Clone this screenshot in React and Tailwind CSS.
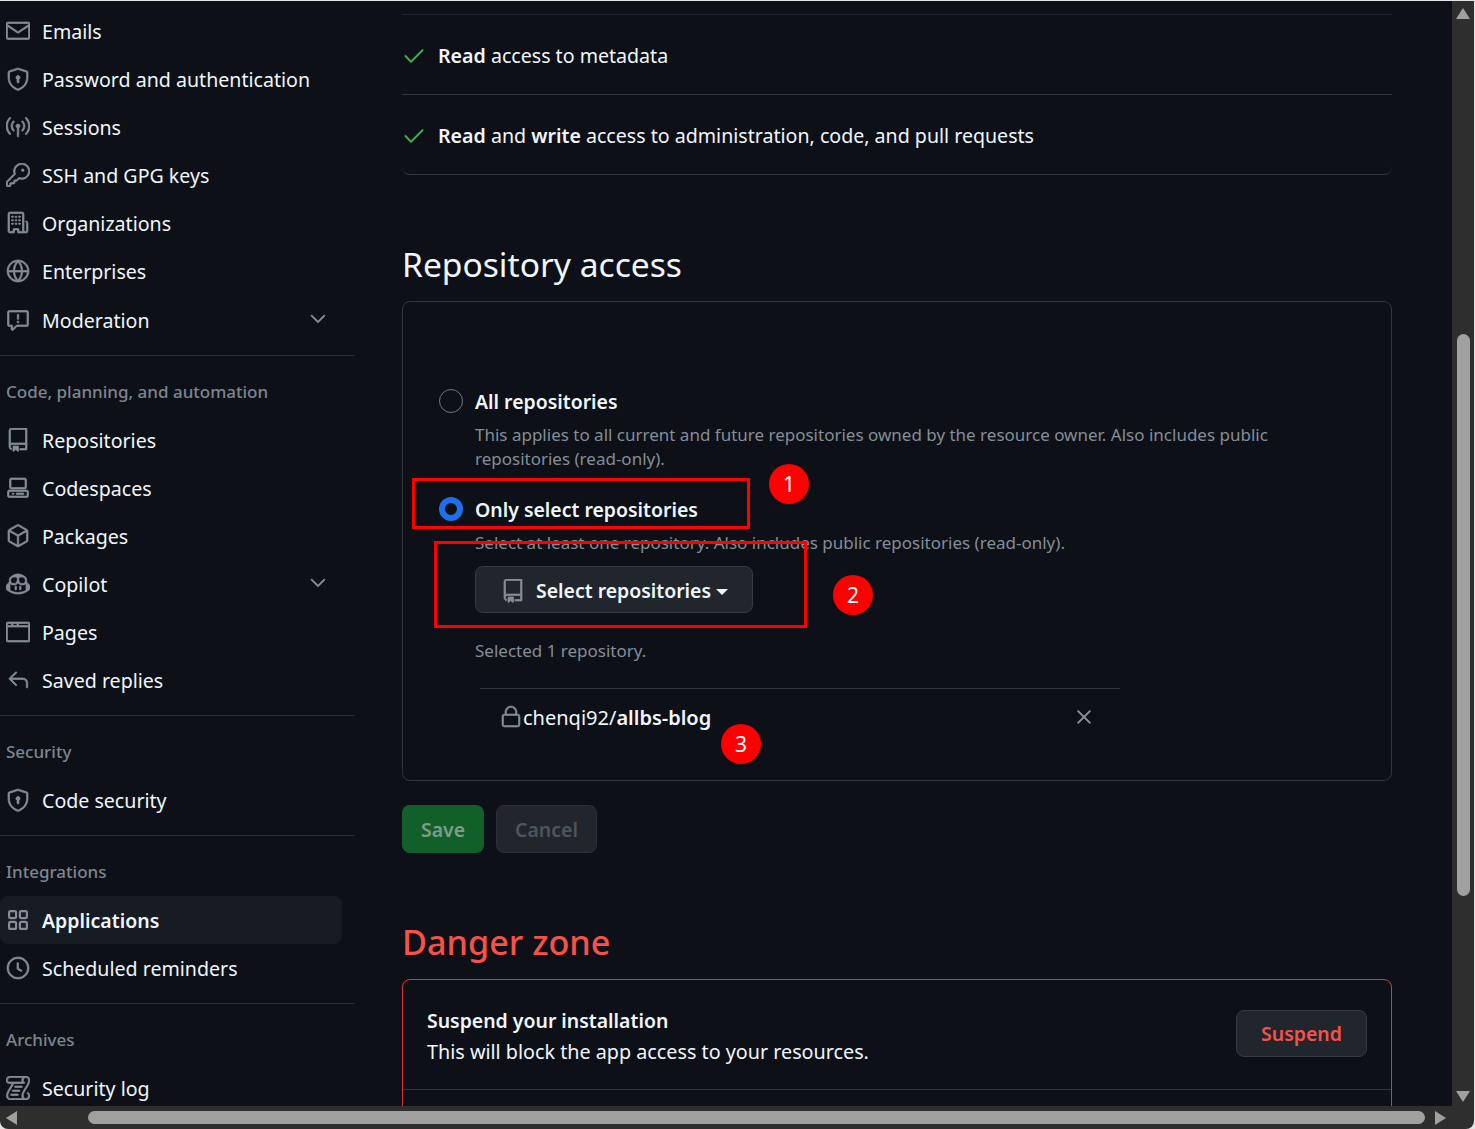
import React from "react";
import {
  GoMail, GoShieldLock, GoBroadcast, GoKey, GoOrganization, GoGlobe, GoReport, GoRepo, GoCodespaces,
  GoPackage, GoCopilot, GoBrowser, GoReply, GoClock, GoLog, GoChevronDown, GoCheck, GoLock, GoX,
} from "react-icons/go";

function GoAppsIcon({ size, className }) {
  return (
    <svg width={size} height={size} viewBox="0 0 24 24" fill="none" stroke="currentColor" className={className}>
      <g strokeWidth="2.2">
        <rect x="3.1" y="3.1" width="7" height="7" rx="1.5" />
        <rect x="13.9" y="3.1" width="7" height="7" rx="1.5" />
        <rect x="3.1" y="13.9" width="7" height="7" rx="1.5" />
        <rect x="13.9" y="13.9" width="7" height="7" rx="1.5" />
      </g>
    </svg>
  );
}

function Item({ icon: Icon, label, chevron, active, className = "" }) {
  return (
    <div className={`flex h-12 items-center rounded-lg mr-3 pl-[6px] ${active ? "bg-[#171b22] text-[19.5px] font-semibold" : ""} ${className}`}>
      <Icon size={24} className="shrink-0 stroke-[0.7] text-[#848d97]" />
      <span className="ml-3 flex-1 whitespace-nowrap pt-[2px] text-[#f0f6fc]">{label}</span>
      {chevron && <GoChevronDown size={24} className="mr-3 mb-[2px] stroke-[0.6] text-[#848d97]" />}
    </div>
  );
}

function Heading({ children }) {
  return <div className="flex h-[24px] items-center pl-[6px] text-[17px] font-medium text-[#7d8590]">{children}</div>;
}

function Divider() {
  return <div className="h-px bg-[#2a2f36]" />;
}

function Sidebar() {
  return (
    <nav className="w-[354px] shrink-0 pt-[6px]">
      <Item icon={GoMail} label="Emails" />
      <Item icon={GoShieldLock} label="Password and authentication" />
      <Item icon={GoBroadcast} label="Sessions" />
      <Item icon={GoKey} label="SSH and GPG keys" />
      <Item icon={GoOrganization} label="Organizations" />
      <Item icon={GoGlobe} label="Enterprises" />
      <Item icon={GoReport} label="Moderation" chevron className="mt-px" />
      <div className="mt-[11px]"><Divider /></div>
      <div className="mt-6 mb-[12px]"><Heading>Code, planning, and automation</Heading></div>
      <Item icon={GoRepo} label="Repositories" />
      <Item icon={GoCodespaces} label="Codespaces" />
      <Item icon={GoPackage} label="Packages" />
      <Item icon={GoCopilot} label="Copilot" chevron />
      <Item icon={GoBrowser} label="Pages" />
      <Item icon={GoReply} label="Saved replies" />
      <div className="mt-[11px]"><Divider /></div>
      <div className="mt-6 mb-[12px]"><Heading>Security</Heading></div>
      <Item icon={GoShieldLock} label="Code security" />
      <div className="mt-[11px]"><Divider /></div>
      <div className="mt-6 mb-[12px]"><Heading>Integrations</Heading></div>
      <Item icon={GoAppsIcon} label="Applications" active />
      <Item icon={GoClock} label="Scheduled reminders" />
      <div className="mt-[11px]"><Divider /></div>
      <div className="mt-6 mb-[12px]"><Heading>Archives</Heading></div>
      <Item icon={GoLog} label="Security log" />
    </nav>
  );
}

function Perm({ children, last }) {
  return (
    <div className={`box-border flex h-[80px] items-center border-[#30363d] pt-[2px] ${last ? "rounded-b-lg border-b" : "border-b"}`}>
      <GoCheck size={24} className="shrink-0 stroke-[0.6] text-[#3fb950]" />
      <span className="ml-[12px] text-[#f0f6fc]">{children}</span>
    </div>
  );
}

function Main() {
  return (
    <main className="ml-[48px] w-[990px] shrink-0 pt-[13px]">
      <div className="border-t border-[#21262d]">
        <Perm><b className="font-semibold">Read</b> access to metadata</Perm>
        <Perm last><b className="font-semibold">Read</b> and <b className="font-semibold">write</b> access to administration, code, and pull requests</Perm>
      </div>

      <h2 className="mt-[61px] text-[33.6px] leading-[56px] text-[#f0f6fc]">Repository access</h2>

      <section className="mt-[9px] h-[480px] rounded-lg border border-[#30363d] pl-[36px] pt-[87px]">
        <div className="flex h-6 items-center">
          <span className="box-border h-6 w-6 shrink-0 rounded-full border border-[#6e7681]" />
          <span className="ml-3 pt-[2px] text-[19.45px] font-semibold text-[#f0f6fc]">All repositories</span>
        </div>
        <p className="ml-[36px] mt-[10px] w-[820px] text-[17px] leading-6 text-[#848d97]">
          This applies to all current and future repositories owned by the resource owner. Also includes public repositories (read-only).
        </p>
        <div className="mt-[26px] flex h-6 items-center">
          <span className="box-border h-6 w-6 shrink-0 rounded-full border-[6px] border-[#1f6feb] bg-[#0d1117]" />
          <span className="ml-3 pt-[2px] text-[19.45px] font-semibold text-[#f0f6fc]">Only select repositories</span>
        </div>
        <p className="ml-[36px] mt-[10px] text-[17px] leading-6 text-[#848d97]">
          Select at least one repository. Also includes public repositories (read-only).
        </p>
        <button className="ml-[36px] mt-[11px] box-border flex h-[47px] w-[278px] items-center rounded-lg border border-[#363b42] bg-[#21262d] pl-[25px] pt-[2px] text-[19.45px] font-semibold text-[#f0f6fc]">
          <GoRepo size={24} className="stroke-[0.7] text-[#848d97]" />
          <span className="ml-[11px]">Select repositories</span>
          <span className="ml-[5px] mt-[3px] h-0 w-0 border-x-[6px] border-t-[6px] border-x-transparent border-t-[#f0f6fc]" />
        </button>
        <p className="ml-[36px] mt-[26px] text-[17px] leading-6 text-[#848d97]">Selected 1 repository.</p>
        <div className="ml-[41px] mt-[25px] flex h-[58px] w-[640px] items-center border-t border-[#30363d] pl-[19px] pr-[24px]">
          <GoLock size={24} className="mb-[2px] shrink-0 stroke-[0.6] text-[#848d97]" />
          <span className="flex-1 text-[20px] text-[#f0f6fc]">chenqi92/<b className="font-semibold">allbs-blog</b></span>
          <GoX size={24} className="mb-[2px] stroke-[0.7] text-[#848d97]" />
        </div>
      </section>

      <div className="mt-[24px] flex gap-3 text-[19.45px] font-semibold">
        <button className="box-border h-[48px] w-[82px] rounded-lg bg-[#11602a] pt-[2px] text-[#7d9e86]">Save</button>
        <button className="box-border h-[48px] w-[101px] rounded-lg border border-[#2a3038] bg-[#21262d] pt-[2px] text-[#4e555d]">Cancel</button>
      </div>

      <h2 className="mt-[61px] text-[34.2px] font-medium leading-[56px] text-[#f85149]">Danger zone</h2>

      <section className="mt-[9px] h-[200px] rounded-t-lg border border-[#da3633]">
        <div className="flex h-[110px] items-center justify-between border-b border-[#30363d] pl-[24px] pr-[24px]">
          <div className="pt-[2px] text-[#f0f6fc]">
            <div className="text-[19.45px] font-semibold leading-[31px]">Suspend your installation</div>
            <div className="text-[19.75px] leading-[31px]">This will block the app access to your resources.</div>
          </div>
          <button className="mb-[3px] box-border h-[47px] w-[131px] rounded-lg border border-[#363b42] bg-[#21262d] pt-[2px] text-[19.45px] font-semibold text-[#f85149]">Suspend</button>
        </div>
      </section>
    </main>
  );
}

function Annotation({ className, children }) {
  return (
    <div className={`absolute flex items-center justify-center ${className}`}>{children}</div>
  );
}

function Tri({ className }) {
  return <div className={`h-0 w-0 ${className}`} />;
}

export default function App() {
  return (
    <div className="relative h-[1129px] w-[1475px] overflow-hidden bg-[#e4e4e4] pt-px text-[19.6px] [font-family:'Noto_Sans','Open_Sans',sans-serif]">
      <div className="flex h-[1128px] w-[1474px] flex-col overflow-hidden rounded-b-lg bg-[#2e2e2e]">
        <div className="flex h-[1105px]">
          <div className="flex w-[1452px] overflow-hidden bg-[#0d1117]">
            <Sidebar />
            <Main />
          </div>
          <div className="flex w-[22px] flex-col items-center pt-[7px]">
            <Tri className="border-x-[7px] border-b-[11px] border-x-transparent border-b-[#a0a0a0]" />
            <div className="mt-[315px] h-[562px] w-[13px] rounded-full bg-[#a0a0a0]" />
            <Tri className="mt-[195px] border-x-[7px] border-t-[11px] border-x-transparent border-t-[#a0a0a0]" />
          </div>
        </div>
        <div className="flex h-[23px] items-center pl-[6px]">
          <Tri className="border-y-[7px] border-r-[11px] border-y-transparent border-r-[#a0a0a0]" />
          <div className="ml-[71px] h-[13px] w-[1337px] rounded-full bg-[#a0a0a0]" />
          <Tri className="ml-[10px] border-y-[7px] border-l-[11px] border-y-transparent border-l-[#a0a0a0]" />
        </div>
      </div>

      <Annotation className="left-[412px] top-[478px] h-[51px] w-[338px] border-[3px] border-[#ff0000]" />
      <Annotation className="left-[434px] top-[541px] h-[87px] w-[373px] border-[3px] border-[#ff0000]" />
      <Annotation className="left-[769px] top-[464px] h-[40px] w-[40px] rounded-full bg-[#ff0000] pt-[2px] text-[21px] text-white">1</Annotation>
      <Annotation className="left-[833px] top-[575px] h-[40px] w-[40px] rounded-full bg-[#ff0000] pt-[2px] text-[21px] text-white">2</Annotation>
      <Annotation className="left-[721px] top-[724px] h-[40px] w-[40px] rounded-full bg-[#ff0000] pt-[2px] text-[21px] text-white">3</Annotation>
    </div>
  );
}
